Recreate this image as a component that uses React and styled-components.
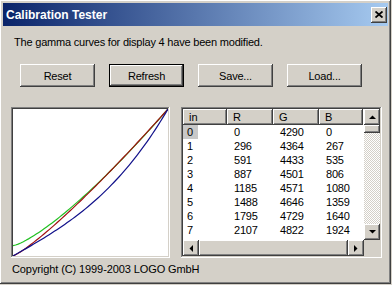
import React from "react";
import styled, { createGlobalStyle } from "styled-components";

const GlobalStyle = createGlobalStyle`
  html, body {
    margin: 0;
    padding: 0;
    background: #d4d0c8;
  }
  body {
    font-family: "Liberation Sans", Arial, sans-serif;
    font-size: 11px;
    color: #000;
  }
`;

const raised = `
  box-shadow: inset -1px -1px #404040, inset 1px 1px #ffffff,
    inset -2px -2px #808080, inset 2px 2px #d4d0c8;
`;

const sunken = `
  box-shadow: inset -1px -1px #ffffff, inset 1px 1px #808080,
    inset -2px -2px #d4d0c8, inset 2px 2px #404040;
`;

const Window = styled.div`
  width: 391px;
  height: 284px;
  box-sizing: border-box;
  padding: 3px;
  background: #d4d0c8;
  ${raised}
  display: flex;
  flex-direction: column;
`;

const TitleBar = styled.div`
  height: 23px;
  flex-shrink: 0;
  display: flex;
  align-items: center;
  justify-content: space-between;
  padding: 0 1px 0 3px;
  background: linear-gradient(to right, #0a246a, #a6caf0);
  color: #fff;
  font-weight: bold;
  font-size: 12px;
`;

const CloseButton = styled.div`
  width: 16px;
  height: 16px;
  box-sizing: border-box;
  background: #d4d0c8;
  ${raised}
  display: flex;
  align-items: center;
  justify-content: center;
`;

const Message = styled.div`
  padding: 10px 0 0 11px;
  line-height: 13px;
  letter-spacing: -0.2px;
`;

const ButtonRow = styled.div`
  display: flex;
  gap: 14px;
  padding: 15px 0 0 17px;
`;

const Button = styled.div`
  width: 75px;
  height: 23px;
  box-sizing: border-box;
  display: flex;
  align-items: center;
  justify-content: center;
  letter-spacing: -0.2px;
  background: #d4d0c8;
  ${(p) =>
    p.$default
      ? `border: 1px solid #000;
         box-shadow: inset -1px -1px #404040, inset 1px 1px #ffffff,
           inset -2px -2px #808080, inset 2px 2px #d4d0c8;`
      : raised}
`;

const Panels = styled.div`
  display: flex;
  gap: 11px;
  padding: 20px 0 0 8px;
`;

const Graph = styled.div`
  width: 159px;
  height: 151px;
  box-sizing: border-box;
  padding: 2px;
  background: #fff;
  ${sunken}
  svg {
    display: block;
  }
`;

const TableFrame = styled.div`
  width: 201px;
  height: 151px;
  box-sizing: border-box;
  padding: 2px;
  background: #fff;
  ${sunken}
  display: grid;
  grid-template-columns: 1fr 16px;
  grid-template-rows: 1fr 16px;
`;

const List = styled.div`
  overflow: hidden;
  background: #fff;
`;

const Row = styled.div`
  display: grid;
  grid-template-columns: 44px 46px 46px 44px;
  height: ${(p) => (p.$head ? 16 : 14)}px;
  line-height: ${(p) => (p.$head ? 16 : 14)}px;
`;

const HeadCell = styled.div`
  background: #d4d0c8;
  padding-left: 6px;
  box-shadow: inset -1px -1px #404040, inset 1px 1px #ffffff,
    inset -2px -2px #808080;
`;

const Cell = styled.div`
  padding-left: ${(p) => (p.$first ? 0 : 7)}px;
  letter-spacing: -0.2px;
  white-space: nowrap;
`;

const Label = styled.span`
  display: inline-block;
  padding: 0 5px 0 4px;
  background: ${(p) => (p.$selected ? "#c8c8c8" : "transparent")};
`;

const VScroll = styled.div`
  display: flex;
  flex-direction: column;
  background: repeating-conic-gradient(#d4d0c8 0 25%, #ffffff 0 50%) 0 0 / 2px 2px;
`;

const HScroll = styled.div`
  display: flex;
`;

const ArrowButton = styled.div`
  width: 16px;
  height: 16px;
  flex-shrink: 0;
  box-sizing: border-box;
  background: #d4d0c8;
  ${raised}
  display: flex;
  align-items: center;
  justify-content: center;
`;

const Thumb = styled.div`
  background: #d4d0c8;
  ${raised}
  ${(p) => (p.$horizontal ? "flex: 1;" : "height: 8px;")}
`;

const Track = styled.div`
  flex: 1;
`;

const Corner = styled.div`
  background: #d4d0c8;
`;

const Copyright = styled.div`
  padding: 5px 0 0 9px;
  line-height: 13px;
  letter-spacing: -0.1px;
`;

const Arrow = ({ dir }) => {
  const shapes = {
    up: "0,4 7,4 3.5,0.5",
    down: "0,0 7,0 3.5,3.5",
    left: "4,0 4,7 0.5,3.5",
    right: "0,0 0,7 3.5,3.5",
  };
  const horiz = dir === "left" || dir === "right";
  return (
    <svg width={horiz ? 4 : 7} height={horiz ? 7 : 4}>
      <polygon points={shapes[dir]} fill="#000" />
    </svg>
  );
};

const rows = [
  [0, 0, 4290, 0],
  [1, 296, 4364, 267],
  [2, 591, 4433, 535],
  [3, 887, 4501, 806],
  [4, 1185, 4571, 1080],
  [5, 1488, 4646, 1359],
  [6, 1795, 4729, 1640],
  [7, 2107, 4822, 1924],
];

const W = 155;
const H = 147;

// gamma curve sampled over the plot area
function curve(fn) {
  const pts = [];
  for (let i = 0; i <= 60; i++) {
    const t = i / 60;
    pts.push(`${(t * W).toFixed(2)},${(H - fn(t) * H).toFixed(2)}`);
  }
  return pts.join(" ");
}

const Line = ({ fn, color }) => (
  <polyline points={curve(fn)} fill="none" stroke={color} strokeWidth="1.2" />
);

const GammaChart = () => (
  <svg width={W} height={H} viewBox={`0 0 ${W} ${H}`}>
    <Line fn={(t) => 0.07 + 0.93 * Math.pow(t, 1.3)} color="#22c022" />
    <Line fn={(t) => Math.pow(t, 1.18)} color="#a01010" />
    <Line fn={(t) => 0.6 * t + 0.4 * Math.pow(t, 3)} color="#10108a" />
  </svg>
);

export default function App() {
  return (
    <>
      <GlobalStyle />
      <Window>
        <TitleBar>
          <span>Calibration Tester</span>
          <CloseButton>
            <svg width="8" height="7" viewBox="0 0 8 7">
              <path d="M0.5,0.5 L7.5,6.5 M7.5,0.5 L0.5,6.5" stroke="#000" strokeWidth="1.8" />
            </svg>
          </CloseButton>
        </TitleBar>
        <Message>The gamma curves for display 4 have been modified.</Message>
        <ButtonRow>
          <Button>Reset</Button>
          <Button $default>Refresh</Button>
          <Button>Save...</Button>
          <Button>Load...</Button>
        </ButtonRow>
        <Panels>
          <Graph>
            <GammaChart />
          </Graph>
          <TableFrame>
            <List>
              <Row $head>
                <HeadCell>in</HeadCell>
                <HeadCell>R</HeadCell>
                <HeadCell>G</HeadCell>
                <HeadCell>B</HeadCell>
              </Row>
              {rows.map((r) => (
                <Row key={r[0]}>
                  <Cell $first>
                    <Label $selected={r[0] === 0}>{r[0]}</Label>
                  </Cell>
                  <Cell>{r[1]}</Cell>
                  <Cell>{r[2]}</Cell>
                  <Cell>{r[3]}</Cell>
                </Row>
              ))}
            </List>
            <VScroll>
              <ArrowButton>
                <Arrow dir="up" />
              </ArrowButton>
              <Thumb />
              <Track />
              <ArrowButton>
                <Arrow dir="down" />
              </ArrowButton>
            </VScroll>
            <HScroll>
              <ArrowButton>
                <Arrow dir="left" />
              </ArrowButton>
              <Thumb $horizontal />
              <ArrowButton>
                <Arrow dir="right" />
              </ArrowButton>
            </HScroll>
            <Corner />
          </TableFrame>
        </Panels>
        <Copyright>Copyright (C) 1999-2003 LOGO GmbH</Copyright>
      </Window>
    </>
  );
}
